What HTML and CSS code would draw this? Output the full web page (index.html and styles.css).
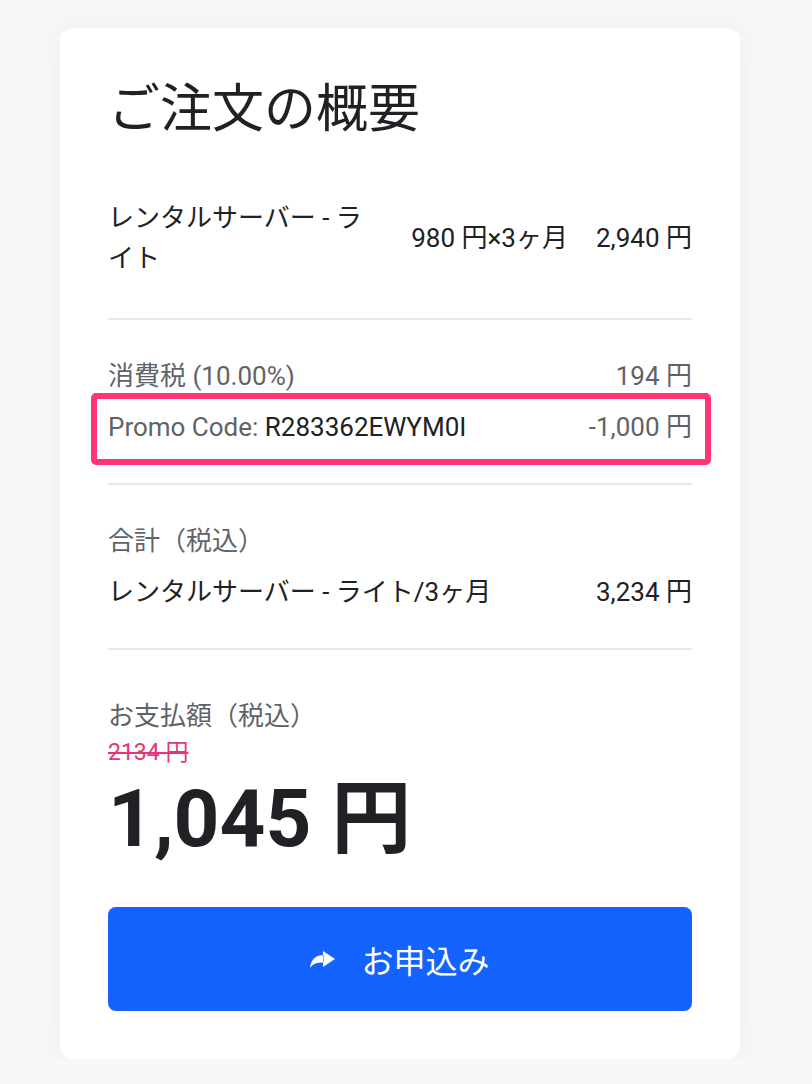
FILE: index.html
```html
<!DOCTYPE html>
<html lang="ja">
<head>
    <meta charset="UTF-8">
    <meta name="viewport" content="width=device-width, initial-scale=1.0">
    <title>ご注文の概要</title>
    <link rel="stylesheet" href="styles.css">
</head>
<body>
    <div class="card">
        <h1 class="title">ご注文の概要</h1>

        <div class="section section-first">
            <div class="item">
                <p class="item-name">レンタルサーバー - ライト</p>
                <p class="item-qty">980 円×3ヶ月</p>
                <p class="item-price">2,940 円</p>
            </div>
        </div>

        <div class="section">
            <div class="row muted">
                <span>消費税 (10.00%)</span>
                <span>194 円</span>
            </div>
            <div class="row muted promo">
                <span>Promo Code: <b class="code">R283362EWYM0I</b></span>
                <span>-1,000 円</span>
            </div>
        </div>

        <div class="section">
            <div class="row muted">
                <span>合計（税込）</span>
            </div>
            <div class="row">
                <span>レンタルサーバー - ライト/3ヶ月</span>
                <span>3,234 円</span>
            </div>
        </div>

        <div class="section section-last">
            <p class="label">お支払額（税込）</p>
            <p class="old-price">2134 円</p>
            <p class="total">1,045 円</p>

            <button class="btn-apply">
                <svg class="btn-icon" viewBox="0 0 25 17" width="25" height="17">
                    <path d="M13 0 L25 8 L13 16 Z M13.5 4 C 6 4, 1 8, 0 17 C 3 12.5, 7 11.5, 13.5 11.5 Z" fill="#fff"/>
                </svg>
                お申込み
            </button>
        </div>
    </div>
</body>
</html>
```

FILE: styles.css
```css
* {
    margin: 0;
    padding: 0;
    box-sizing: border-box;
}

body {
    font-family: Roboto, "Noto Sans CJK JP", sans-serif;
    color: #202124;
    background-color: #f8f8f8;
}

.card {
    width: 680px;
    margin: 28px 0 0 60px;
    padding: 48px;
    background-color: #fff;
    border-radius: 12px;
    box-shadow: 0 0 32px rgba(0, 0, 0, 0.06);
}

.title {
    font-size: 52px;
    font-weight: 400;
    line-height: 68px;
    margin-bottom: 54px;
}

.section {
    padding: 36px 0;
    border-top: 2px solid #e8e8ea;
}

.section-first {
    border-top: none;
    padding-top: 0;
    padding-bottom: 40px;
}

.section-last {
    padding-top: 46px;
    padding-bottom: 0;
}

.item {
    display: flex;
    align-items: center;
    gap: 28px;
    font-size: 26px;
    line-height: 40px;
}

.item-name {
    flex: 1;
}

.row {
    display: flex;
    justify-content: space-between;
    font-size: 26px;
    line-height: 40px;
}

.row + .row {
    margin-top: 11px;
}

.muted {
    color: #5f6368;
}

.promo {
    position: relative;
}

/* highlight frame around the promo code line */
.promo::after {
    content: "";
    position: absolute;
    top: -14px;
    right: -19px;
    bottom: -18px;
    left: -17px;
    border: 6px solid #ff3673;
    border-radius: 5px;
}

.code {
    font-weight: 400;
    color: #202124;
}

.label {
    font-size: 26px;
    line-height: 40px;
    color: #5f6368;
}

.old-price {
    font-size: 23px;
    line-height: 34px;
    color: #e8337a;
    text-decoration: line-through;
}

.total {
    font-size: 80px;
    font-weight: 700;
    line-height: 98px;
    margin-bottom: 39px;
}

.btn-apply {
    width: 100%;
    height: 104px;
    display: flex;
    justify-content: center;
    align-items: center;
    gap: 26px;
    border: none;
    border-radius: 8px;
    background-color: #1463ff;
    color: #fff;
    font-family: Roboto, "Noto Sans CJK JP", sans-serif;
    font-size: 32px;
    cursor: pointer;
}

.btn-icon {
    display: block;
}
```
